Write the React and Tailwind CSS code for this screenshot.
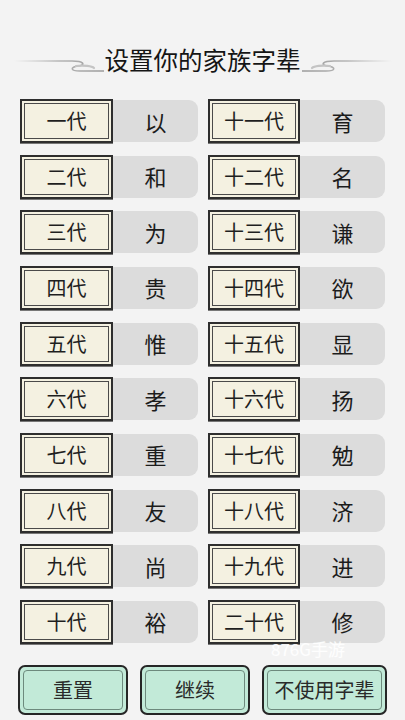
import React from 'react';

const FONT = { fontFamily: '"Noto Sans CJK SC", "Noto Sans", sans-serif' };

const LEFT = [
  ['一代', '以'], ['二代', '和'], ['三代', '为'], ['四代', '贵'], ['五代', '惟'],
  ['六代', '孝'], ['七代', '重'], ['八代', '友'], ['九代', '尚'], ['十代', '裕'],
];
const RIGHT = [
  ['十一代', '育'], ['十二代', '名'], ['十三代', '谦'], ['十四代', '欲'], ['十五代', '显'],
  ['十六代', '扬'], ['十七代', '勉'], ['十八代', '济'], ['十九代', '进'], ['二十代', '修'],
];

// swirl ornament next to the heading
function Flourish({ flip }) {
  return (
    <svg width="90" height="20" viewBox="0 0 90 20" className={flip ? 'scale-x-[-1]' : ''}>
      <defs>
        <linearGradient id={flip ? 'fr' : 'fl'} x1="0" x2="1" y1="0" y2="0">
          <stop offset="0" stopColor="#bdbdbd" stopOpacity="0" />
          <stop offset="0.5" stopColor="#b5b5b5" />
          <stop offset="1" stopColor="#9a9a9a" />
        </linearGradient>
      </defs>
      <path d="M0 5 H58 C70 5 72 9 64 10 C56 11 56 15 66 15 H90" fill="none" stroke={`url(#${flip ? 'fr' : 'fl'})`} strokeWidth="1.6" />
      <path d="M62 10 C70 9 78 10 80 12" fill="none" stroke="#c4c4c4" strokeWidth="2.2" strokeLinecap="round" />
    </svg>
  );
}

function Row({ gen, name, w }) {
  return (
    <div className="flex h-[44px] items-stretch">
      <div className={`${w} shrink-0 border-2 border-[#2e2e2e] bg-[#f4f1e1] p-[2px] shadow-[0_1px_0_#777]`}>
        <div className="flex h-full items-center justify-center border border-[#4a4a4a] text-[20px] text-[#1f1f1f]">
          {gen}
        </div>
      </div>
      <div className="my-[1px] flex flex-1 items-center justify-center rounded-r-[9px] bg-[#dcdcdc] text-[22px] text-[#1c1c1c]">
        {name}
      </div>
    </div>
  );
}

function GreenButton({ label, w }) {
  return (
    <div className={`${w} h-[50px] rounded-[7px] border-2 border-[#262626] bg-[#c2ead8] p-[3px]`}>
      <div className="flex h-full items-center justify-center rounded-[4px] border border-[#6d8a7d] text-[20px] text-[#2a2a2a]">
        {label}
      </div>
    </div>
  );
}

export default function App() {
  return (
    <div className="relative h-[720px] w-[405px] overflow-hidden bg-[#f3f3f3]" style={FONT}>
      <div className="flex h-[99px] items-end justify-center pb-[23px]">
        <div className="flex items-center">
          <div className="mt-[12px] -mr-[2px]"><Flourish /></div>
          <h1 className="px-[3px] text-[24.5px] font-normal leading-none text-[#151515]">设置你的家族字辈</h1>
          <div className="mt-[12px] -ml-[2px]"><Flourish flip /></div>
        </div>
      </div>

      <div className="grid grid-cols-[178px_177px] gap-x-[10px] gap-y-[11.67px] pl-[20px]">
        {LEFT.map((l, i) => (
          <React.Fragment key={l[0]}>
            <Row gen={l[0]} name={l[1]} w="w-[93px]" />
            <Row gen={RIGHT[i][0]} name={RIGHT[i][1]} w="w-[92px]" />
          </React.Fragment>
        ))}
      </div>

      <div className="mt-[21px] flex gap-[12px] pl-[18px]">
        <GreenButton label="重置" w="w-[110px]" />
        <GreenButton label="继续" w="w-[110px]" />
        <GreenButton label="不使用字辈" w="w-[125px]" />
      </div>

      <span className="absolute left-[271px] top-[640px] text-[17px] leading-none text-white/90">876G手游</span>
    </div>
  );
}
